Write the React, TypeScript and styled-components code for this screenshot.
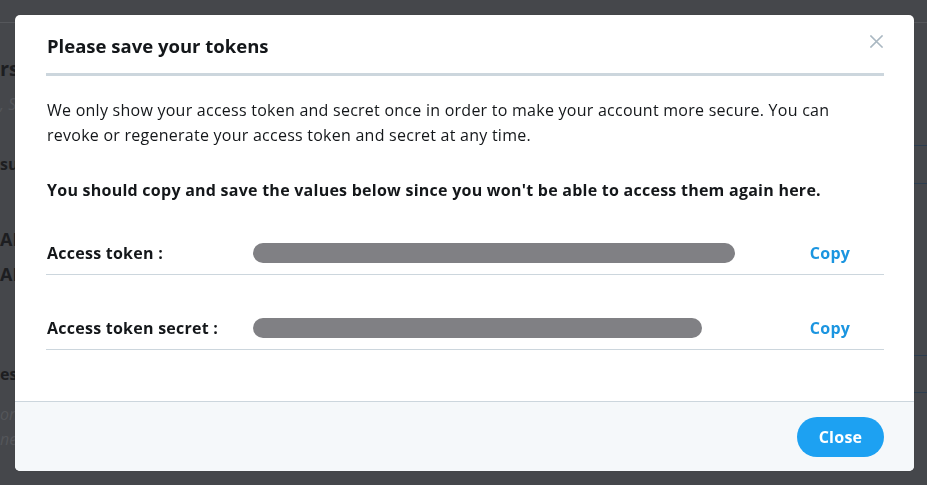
import React from "react";
import styled, { createGlobalStyle } from "styled-components";

const GlobalStyle = createGlobalStyle`
  html, body {
    margin: 0;
    padding: 0;
    background: #45474b;
  }
  body {
    font-family: "Open Sans", "Noto Sans", "Liberation Sans", sans-serif;
    color: #14171a;
  }
`;

// page behind the dimmed overlay, only the edges peek out
const Backdrop = styled.div`
  width: 927px;
  height: 485px;
  display: flex;
  flex-direction: column;
  border-top: 22px solid #45474b;
  box-sizing: border-box;
  overflow: hidden;
`;

const BackdropTopLine = styled.div`
  height: 1px;
  background: #55575b;
`;

const BackdropBody = styled.div`
  flex: 1;
  display: flex;
  justify-content: space-between;
`;

const PeekColumn = styled.div`
  width: 40px;
  display: flex;
  flex-direction: column;
  padding-top: 34px;
`;

const PeekText = styled.div<{ $bold?: boolean; $size?: number; $gap: number }>`
  white-space: nowrap;
  margin-top: ${(p) => p.$gap}px;
  font-size: ${(p) => p.$size ?? 16}px;
  line-height: 24px;
  font-weight: ${(p) => (p.$bold ? 700 : 400)};
  font-style: ${(p) => (p.$bold ? "normal" : "italic")};
  color: ${(p) => (p.$bold ? "#1d1e21" : "#54565a")};
`;

const RightStrip = styled.div`
  width: 13px;
  display: flex;
  flex-direction: column;
  padding-top: 122px;
`;

const StripLine = styled.div<{ $gap: number }>`
  height: 1px;
  background: #2c3e50;
  margin-top: ${(p) => p.$gap}px;
`;

const Overlay = styled.div`
  position: fixed;
  inset: 0;
  padding: 15px 0 0 15px;
`;

const Modal = styled.div`
  position: relative;
  width: 899px;
  height: 456px;
  background: #ffffff;
  border-radius: 5px;
  display: flex;
  flex-direction: column;
  overflow: hidden;
  box-shadow: 0 0 1px rgba(0, 0, 0, 0.3);
`;

const Header = styled.div`
  margin: 0 30px 0 31px;
  padding: 19px 0 15px 1px;
  border-bottom: 3px solid #ccd6dd;
`;

const Title = styled.h2`
  margin: 0;
  font-size: 18.5px;
  line-height: 24px;
  font-weight: 700;
  color: #14171a;
`;

const CloseIcon = styled.button`
  position: absolute;
  top: 19px;
  right: 30px;
  width: 15px;
  height: 15px;
  padding: 1px;
  border: 0;
  background: none;
  cursor: pointer;
  display: flex;
`;

const Body = styled.div`
  flex: 1;
  padding: 22px 30px 0 32px;
  font-size: 16px;
  letter-spacing: 0.25px;
`;

const Paragraph = styled.p<{ $strong?: boolean }>`
  margin: 0 0 ${(p) => (p.$strong ? 0 : 31)}px;
  line-height: 24.5px;
  font-weight: ${(p) => (p.$strong ? 700 : 400)};
  color: #14171a;
`;

const TokenList = styled.div`
  margin: -3px 0 0 -1px;
  display: flex;
  flex-direction: column;
`;

const TokenRow = styled.div`
  display: grid;
  grid-template-columns: 207px 1fr 108px;
  align-items: center;
  padding: 41px 0 9px;
  border-bottom: 1px solid #ccd6dd;
`;

const TokenLabel = styled.div`
  padding-left: 1px;
  line-height: 24px;
  font-weight: 700;
  color: #14171a;
`;

const MaskedValue = styled.div<{ $width: number }>`
  width: ${(p) => p.$width}px;
  height: 20px;
  border-radius: 10px;
  background: #808084;
`;

const CopyButton = styled.button`
  justify-self: center;
  border: 0;
  background: none;
  padding: 0;
  font-family: inherit;
  font-size: 16px;
  letter-spacing: 0.25px;
  line-height: 24px;
  font-weight: 700;
  color: #1b95e0;
  cursor: pointer;
`;

const Footer = styled.div`
  height: 70px;
  box-sizing: border-box;
  border-top: 1px solid #ccd6dd;
  background: #f5f8fa;
  display: flex;
  justify-content: flex-end;
  align-items: center;
  padding: 0 30px 0 0;
`;

const PrimaryButton = styled.button`
  width: 87px;
  height: 40px;
  border: 0;
  border-radius: 20px;
  background: #1da1f2;
  color: #ffffff;
  font-family: inherit;
  font-size: 16px;
  letter-spacing: 0.25px;
  font-weight: 700;
  cursor: pointer;
`;

const tokens = [
  { id: "token", label: "Access token :", width: 482 },
  { id: "secret", label: "Access token secret :", width: 449 },
];

const App: React.FC = () => {
  return (
    <>
      <GlobalStyle />
      <Backdrop>
        <BackdropTopLine />
        <BackdropBody>
          <PeekColumn>
            <PeekText $bold $size={20} $gap={0}>rs</PeekText>
            <PeekText $gap={11}>, S</PeekText>
            <PeekText $bold $gap={36}>su</PeekText>
            <PeekText $bold $size={18} $gap={51}>AP</PeekText>
            <PeekText $bold $size={18} $gap={11}>AP</PeekText>
            <PeekText $bold $gap={76}>es:</PeekText>
            <PeekText $gap={16}>on</PeekText>
            <PeekText $gap={1}>ne</PeekText>
          </PeekColumn>
          <RightStrip>
            <StripLine $gap={0} />
            <StripLine $gap={37} />
            <StripLine $gap={171} />
            <StripLine $gap={36} />
          </RightStrip>
        </BackdropBody>
      </Backdrop>

      <Overlay>
        <Modal>
          <Header>
            <Title>Please save your tokens</Title>
          </Header>
          <CloseIcon aria-label="Close">
            <svg width="13" height="13" viewBox="0 0 13 13">
              <path d="M1 1 L12 12 M12 1 L1 12" stroke="#aab8c2" strokeWidth="1.6" strokeLinecap="square" />
            </svg>
          </CloseIcon>
          <Body>
            <Paragraph>
              We only show your access token and secret once in order to make your account more secure. You can
              revoke or regenerate your access token and secret at any time.
            </Paragraph>
            <Paragraph $strong>
              You should copy and save the values below since you won't be able to access them again here.
            </Paragraph>
            <TokenList>
              {tokens.map((t) => (
                <TokenRow key={t.id}>
                  <TokenLabel>{t.label}</TokenLabel>
                  <MaskedValue $width={t.width} />
                  <CopyButton>Copy</CopyButton>
                </TokenRow>
              ))}
            </TokenList>
          </Body>
          <Footer>
            <PrimaryButton>Close</PrimaryButton>
          </Footer>
        </Modal>
      </Overlay>
    </>
  );
};

export default App;
